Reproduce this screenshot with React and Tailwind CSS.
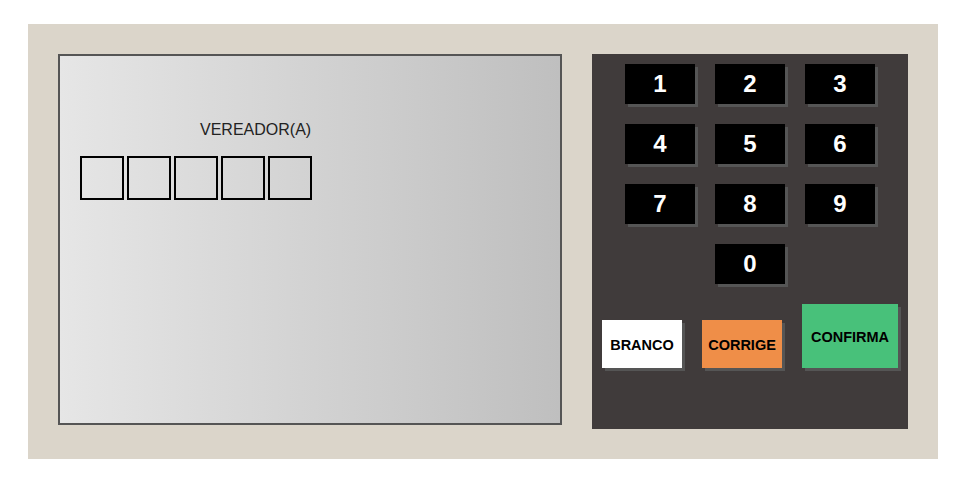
const keys = ["1", "2", "3", "4", "5", "6", "7", "8", "9"];

const Key = ({ n }) => (
  <button className="w-[70px] h-[40px] bg-black text-white text-[24px] font-bold shadow-[3px_3px_0_#555] flex items-center justify-center">
    {n}
  </button>
);

export default function App() {
  return (
    <div
      className="min-h-[496px] bg-white pt-[24px] pl-[28px]"
      style={{ fontFamily: '"Liberation Sans", Arial, sans-serif' }}
    >
      <div className="w-[910px] h-[435px] bg-[#dbd5ca] flex gap-[30px] pt-[30px] pl-[30px]">
        {/* tela */}
        <div className="w-[504px] h-[371px] border-2 border-[#555] bg-gradient-to-r from-[#e6e6e6] to-[#bfbfbf] pt-[65px]">
          <div className="pl-[140px] text-[16px] leading-[18px] text-[#222]">VEREADOR(A)</div>
          <div className="flex gap-[3px] pl-[20px] mt-[17px]">
            {[0, 1, 2, 3, 4].map((i) => (
              <div key={i} className="w-[44px] h-[44px] border-2 border-black" />
            ))}
          </div>
        </div>

        {/* teclado */}
        <div className="w-[316px] h-[375px] bg-[#403b3b] pt-[10px] flex flex-col items-center gap-[20px]">
          <div className="grid grid-cols-3 gap-x-[20px] gap-y-[20px]">
            {keys.map((k) => (
              <Key key={k} n={k} />
            ))}
            <div />
            <Key n="0" />
          </div>
          <div className="flex items-end gap-[20px]">
            <button className="w-[80px] h-[48px] pt-[3px] bg-white text-black text-[14.5px] font-bold shadow-[3px_3px_0_#555]">
              BRANCO
            </button>
            <button className="w-[80px] h-[48px] pt-[3px] bg-[#ef8e48] text-black text-[14.5px] font-bold shadow-[3px_3px_0_#555]">
              CORRIGE
            </button>
            <button className="w-[96px] h-[64px] pt-[3px] bg-[#48c17a] text-black text-[14.5px] font-bold shadow-[3px_3px_0_#555]">
              CONFIRMA
            </button>
          </div>
        </div>
      </div>
    </div>
  );
}
